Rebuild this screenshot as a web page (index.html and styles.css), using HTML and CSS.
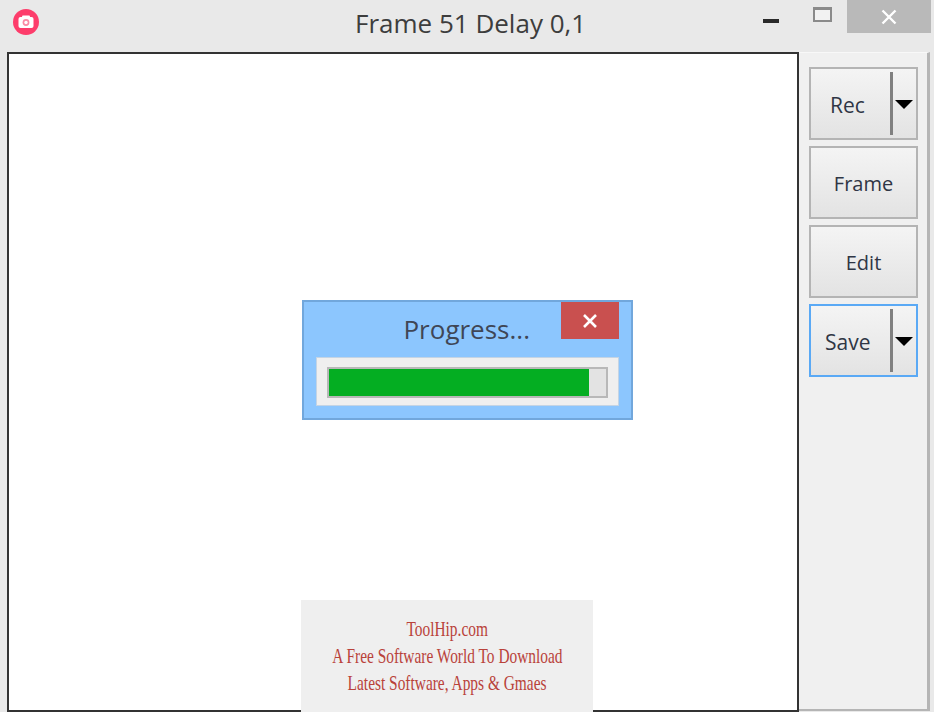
FILE: index.html
```html
<!DOCTYPE html>
<html lang="en">
<head>
  <meta charset="UTF-8" />
  <title>Frame 51 Delay 0,1</title>
  <link rel="stylesheet" href="styles.css">
</head>
<body>
  <div id="app">
    <header id="titlebar">
      <svg class="app-icon" width="28" height="28" viewBox="0 0 28 28">
        <circle cx="14" cy="14" r="13" fill="#fd3d6b"/>
        <rect x="6.5" y="9" width="15" height="11" rx="2" fill="#fff"/>
        <rect x="10" y="7.5" width="8" height="3" rx="1" fill="#fff"/>
        <circle cx="14" cy="14.5" r="3.4" fill="#fb8aa4"/>
        <circle cx="14" cy="14.5" r="1.7" fill="#fff"/>
      </svg>
      <h1 id="title">Frame 51 Delay 0,1</h1>
      <div id="win-controls">
        <span class="win-min"></span>
        <span class="win-max"></span>
        <span class="win-close">
          <svg width="16" height="16" viewBox="0 0 16 16"><path d="M1.5 1.5l13 13M14.500 1.500l-13 13" stroke="#fff" stroke-width="2.400" fill="none"/></svg>
        </span>
      </div>
    </header>

    <div id="content">
      <main id="canvas">
        <div id="progress-box">
          <div class="progress-head">
            <span class="progress-title">Progress...</span>
            <button class="progress-close">
              <svg width="16" height="16" viewBox="0 0 16 16"><path d="M2 2l12 12M14 2L2 14" stroke="#fff" stroke-width="2.600" fill="none"/></svg>
            </button>
          </div>
          <div class="progress-panel">
            <div class="progress-track"><div class="progress-fill" style="width: 94%"></div></div>
          </div>
        </div>
      </main>

      <aside id="sidebar">
        <button class="tool-btn split"><span class="btn-label">Rec</span><span class="btn-line"></span><span class="btn-arrow"></span></button>
        <button class="tool-btn"><span class="btn-label">Frame</span></button>
        <button class="tool-btn"><span class="btn-label">Edit</span></button>
        <button class="tool-btn split active"><span class="btn-label">Save</span><span class="btn-line"></span><span class="btn-arrow"></span></button>
      </aside>
    </div>

    <div id="watermark">
      <p>ToolHip.com</p>
      <p>A Free Software World To Download</p>
      <p>Latest Software, Apps &amp; Gmaes</p>
    </div>
  </div>
</body>
</html>
```

FILE: styles.css
```css
* {
  box-sizing: border-box;
}

body {
  margin: 0;
  background: #e9e9e9;
  font-family: 'Open Sans', 'Noto Sans', sans-serif;
}

#app {
  position: relative;
  width: 934px;
  height: 712px;
  overflow: hidden;
  display: flex;
  flex-direction: column;
}

#titlebar {
  height: 52px;
  flex: none;
  display: flex;
  align-items: flex-start;
  padding: 8px 3px 0 12px;
}

.app-icon {
  flex: none;
}

#title {
  margin: 0;
  width: 232px;
  margin-left: 315px;
  margin-top: -2px;
  font-size: 26px;
  line-height: 34px;
  font-weight: 400;
  color: #3d3d3d;
  white-space: nowrap;
}

#win-controls {
  margin-left: auto;
  margin-top: -8px;
  display: flex;
  align-items: flex-start;
}

.win-min {
  width: 16px;
  height: 4px;
  margin: 19px 34px 0 0;
  background: #2a2a2a;
}

.win-max {
  width: 19px;
  height: 15px;
  margin: 7px 15px 0 0;
  background: #f2f2f2;
  border: 2px solid #8a8a8a;
  border-top-width: 3px;
}

.win-close {
  width: 84px;
  height: 33px;
  background: #b9b9b9;
  display: flex;
  align-items: center;
  justify-content: center;
}

#content {
  flex: 1;
  display: flex;
  padding-left: 7px;
}

#canvas {
  width: 792px;
  height: 660px;
  flex: none;
  background: #fff;
  border: 2px solid #333;
  padding: 246px 0 0 293px;
}

#progress-box {
  width: 331px;
  height: 120px;
  background: #8cc6fe;
  border: 2px solid #71a7dc;
  padding: 0 11px 0 12px;
}

.progress-head {
  height: 55px;
  margin-right: 1px;
  display: flex;
  align-items: flex-start;
  justify-content: flex-end;
}

.progress-title {
  font-size: 26px;
  line-height: 54px;
  margin-right: 31px;
  color: #3f4656;
}

.progress-close {
  width: 58px;
  height: 37px;
  padding: 0;
  border: none;
  background: #c9504f;
  display: flex;
  align-items: center;
  justify-content: center;
}

.progress-panel {
  width: 303px;
  height: 49px;
  background: #efefef;
  border: 1px solid #c4d4e4;
  padding: 9px 10px;
}

.progress-track {
  height: 31px;
  background: #e3e3e3;
  border: 2px solid #b8b8b8;
}

.progress-fill {
  height: 100%;
  background: #04ae22;
}

#sidebar {
  width: 131px;
  height: 659px;
  flex: none;
  background: #f0f0f0;
  border-right: 3px solid #b5b5b5;
  border-bottom: 2px solid #b5b5b5;
  border-top: 1px solid #f8f8f8;
  padding: 14px 0 0 10px;
  display: flex;
  flex-direction: column;
  gap: 6px;
}

.tool-btn {
  position: relative;
  width: 109px;
  height: 73px;
  padding: 2px 0 0;
  flex: none;
  border: 2px solid #b4b4b4;
  background: linear-gradient(#f4f4f4, #e3e3e3);
  font-family: 'Open Sans', 'Noto Sans', sans-serif;
  font-size: 20px;
  color: #2f3645;
  display: flex;
  align-items: center;
  justify-content: center;
}

.tool-btn.split {
  justify-content: flex-start;
  padding-left: 19px;
  font-size: 21px;
}

.tool-btn.active {
  border-color: #5aa9f5;
  padding-left: 14px;
}

.btn-line {
  position: absolute;
  left: 79px;
  top: 3px;
  bottom: 3px;
  width: 3px;
  background: #808080;
}

.btn-arrow {
  position: absolute;
  left: 84px;
  top: 31px;
  border-top: 9px solid #000;
  border-left: 9px solid transparent;
  border-right: 9px solid transparent;
}

#watermark {
  position: absolute;
  left: 301px;
  top: 600px;
  width: 292px;
  height: 112px;
  background: #efefef;
  padding-top: 15px;
  display: flex;
  flex-direction: column;
  align-items: center;
  font-family: 'Liberation Serif', serif;
  font-size: 22px;
  line-height: 27px;
  color: #b9423a;
}

#watermark p {
  margin: 0;
  flex: none;
  width: max-content;
  white-space: nowrap;
  transform: scaleX(0.7);
}
```
